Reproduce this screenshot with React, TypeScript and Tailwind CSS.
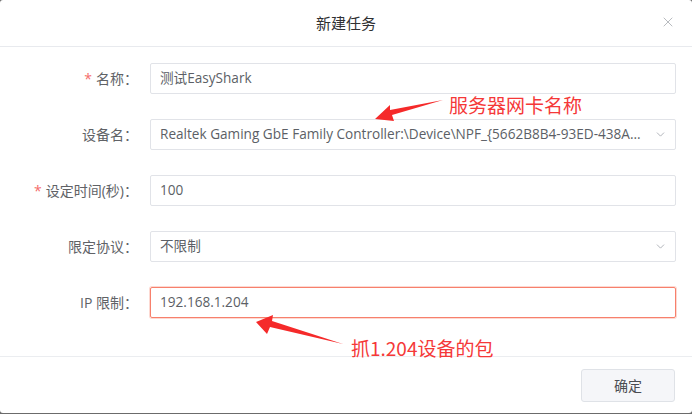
import React from 'react';
import { ChevronDown, X } from 'lucide-react';

const font = { fontFamily: '"Open Sans", "Noto Sans CJK SC", sans-serif' };

function Label({ text, required }: { text: string; required?: boolean }) {
  return (
    <div className="w-[138px] shrink-0 text-right text-[14px] text-[#606266]">
      {required && <span className="mr-[4px] text-[#f56c6c]">*</span>}
      {text}
    </div>
  );
}

function Field({
  label,
  value,
  required,
  select,
  active,
}: {
  label: string;
  value: string;
  required?: boolean;
  select?: boolean;
  active?: boolean;
}) {
  return (
    <div className="flex items-center">
      <Label text={label} required={required} />
      <div
        className={
          active
            ? 'ml-[12px] flex h-[31px] min-w-0 flex-1 items-center rounded-[2px] border border-[#f7806c] pl-[9px] pr-[8px] shadow-[0_0_0_1px_#fdd9d2]'
            : 'ml-[12px] flex h-[31px] min-w-0 flex-1 items-center rounded-[2px] border border-[#e1e3e8] pl-[9px] pr-[8px]'
        }
      >
        <span className="min-w-0 flex-1 truncate text-[13.6px] text-[#5c5f66]">{value}</span>
        {select && <ChevronDown className="ml-[4px] h-[13px] w-[13px] shrink-0 text-[#a0a4ab]" strokeWidth={1.5} />}
      </div>
    </div>
  );
}

export default function App() {
  return (
    <div className="h-[414px] w-[692px] overflow-hidden bg-[#6b6b6b]" style={font}>
      <div className="relative flex h-[413px] w-[692px] flex-col rounded-[3px] bg-white">
        <div className="relative flex h-[47px] shrink-0 items-center justify-center border-b border-[#e8eaee]">
          <span className="text-[15px] text-[#303133]">新建任务</span>
          <X className="absolute right-[16px] top-[14px] h-[16px] w-[16px] text-[#a6a9ae]" strokeWidth={1.2} />
        </div>

        <div className="flex flex-1 flex-col gap-[25px] pl-0 pr-[16px] pt-[16px]">
          <Field label="名称：" value="测试EasyShark" required />
          <Field label="设备名：" value="Realtek Gaming GbE Family Controller:\Device\NPF_{5662B8B4-93ED-438A..." select />
          <Field label="设定时间(秒)：" value="100" required />
          <Field label="限定协议：" value="不限制" select />
          <Field label="IP 限制：" value="192.168.1.204" active />
        </div>

        <div className="flex h-[57px] shrink-0 items-start justify-end border-t border-[#ebedf0] pr-[17px] pt-[12px]">
          <button className="h-[33px] w-[94px] rounded-[3px] border border-[#dfe2e7] bg-[#f5f6f9] text-[14px] text-[#4a4d52]">
            确定
          </button>
        </div>

        {/* red annotations */}
        <svg className="absolute left-0 top-0" width="692" height="413" viewBox="0 0 692 413">
          <polygon points="443,100 390,110 390,105 375,119 394,121 392,115" fill="#f52a2a" />
          <polygon points="343,344 272,321 273,315 256,322 267,334 270,327" fill="#f52a2a" />
        </svg>
        <span
          className="absolute left-[449px] top-[92px] text-[19px] leading-[25px] text-[#f53838]"
          style={{ fontFamily: '"Noto Sans CJK SC", sans-serif' }}
        >
          服务器网卡名称
        </span>
        <span
          className="absolute left-[351px] top-[335px] text-[19px] leading-[25px] text-[#f53838]"
          style={{ fontFamily: '"Noto Sans CJK SC", sans-serif' }}
        >
          抓1.204设备的包
        </span>
      </div>
    </div>
  );
}
